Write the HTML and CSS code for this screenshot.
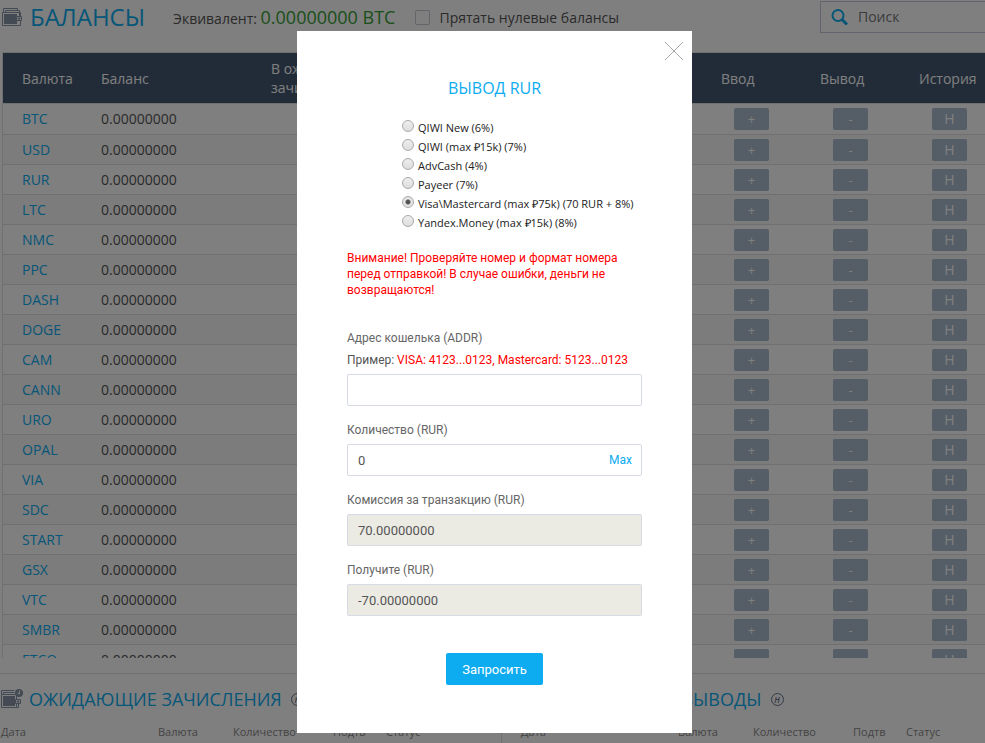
FILE: index.html
```html
<!DOCTYPE html>
<html lang="ru">
<head>
    <meta charset="UTF-8">
    <meta name="viewport" content="width=device-width, initial-scale=1.0">
    <title>Балансы</title>
    <link rel="stylesheet" href="styles.css">
</head>
<body>

    <div class="page">
        <!-- Top bar -->
        <header class="topbar">
            <svg class="wallet-icon" width="20" height="18" viewBox="0 0 20 18" fill="none" stroke="#8795a8">
                <path d="M1.500 4V.5h14v2M3.500 4V2.500h14V8"/>
                <path d="M.5 4.500h18v13H.5z"/>
                <path d="M2 6h13v10H2z" fill="#8795a8" stroke="none"/>
                <path d="M14.500 8.500h5v4h-5z" fill="#fff"/>
                <path d="M16 10h2v1h-2z"/>
            </svg>
            <h1>БАЛАНСЫ</h1>
            <p class="equivalent">Эквивалент: <span>0.00000000 BTC</span></p>
            <label class="hide-zero"><input type="checkbox"> Прятать нулевые балансы</label>
            <div class="search">
                <svg width="17" height="16" viewBox="0 0 17 16" fill="none" stroke="#0dacf1" stroke-width="2">
                    <circle cx="7" cy="6.500" r="5.500"/>
                    <path d="M11 10.500l5 5" stroke-width="3"/>
                </svg>
                <input type="text" placeholder="Поиск" aria-label="Поиск">
            </div>
        </header>

        <!-- Balances -->
        <div class="balances">
            <table>
                <colgroup>
                    <col class="col-currency">
                    <col class="col-balance">
                    <col>
                    <col class="col-action">
                    <col class="col-action">
                    <col class="col-action">
                </colgroup>
                <thead>
                    <tr><th>Валюта</th><th>Баланс</th><th>В ожидании<br>зачисления</th><th>Ввод</th><th>Вывод</th><th>История</th></tr>
                </thead>
                <tbody>
                    <tr><td><a href="#">BTC</a></td><td>0.00000000</td><td></td><td><button>+</button></td><td><button>-</button></td><td><button class="history">H</button></td></tr>
                    <tr><td><a href="#">USD</a></td><td>0.00000000</td><td></td><td><button>+</button></td><td><button>-</button></td><td><button class="history">H</button></td></tr>
                    <tr><td><a href="#">RUR</a></td><td>0.00000000</td><td></td><td><button>+</button></td><td><button>-</button></td><td><button class="history">H</button></td></tr>
                    <tr><td><a href="#">LTC</a></td><td>0.00000000</td><td></td><td><button>+</button></td><td><button>-</button></td><td><button class="history">H</button></td></tr>
                    <tr><td><a href="#">NMC</a></td><td>0.00000000</td><td></td><td><button>+</button></td><td><button>-</button></td><td><button class="history">H</button></td></tr>
                    <tr><td><a href="#">PPC</a></td><td>0.00000000</td><td></td><td><button>+</button></td><td><button>-</button></td><td><button class="history">H</button></td></tr>
                    <tr><td><a href="#">DASH</a></td><td>0.00000000</td><td></td><td><button>+</button></td><td><button>-</button></td><td><button class="history">H</button></td></tr>
                    <tr><td><a href="#">DOGE</a></td><td>0.00000000</td><td></td><td><button>+</button></td><td><button>-</button></td><td><button class="history">H</button></td></tr>
                    <tr><td><a href="#">CAM</a></td><td>0.00000000</td><td></td><td><button>+</button></td><td><button>-</button></td><td><button class="history">H</button></td></tr>
                    <tr><td><a href="#">CANN</a></td><td>0.00000000</td><td></td><td><button>+</button></td><td><button>-</button></td><td><button class="history">H</button></td></tr>
                    <tr><td><a href="#">URO</a></td><td>0.00000000</td><td></td><td><button>+</button></td><td><button>-</button></td><td><button class="history">H</button></td></tr>
                    <tr><td><a href="#">OPAL</a></td><td>0.00000000</td><td></td><td><button>+</button></td><td><button>-</button></td><td><button class="history">H</button></td></tr>
                    <tr><td><a href="#">VIA</a></td><td>0.00000000</td><td></td><td><button>+</button></td><td><button>-</button></td><td><button class="history">H</button></td></tr>
                    <tr><td><a href="#">SDC</a></td><td>0.00000000</td><td></td><td><button>+</button></td><td><button>-</button></td><td><button class="history">H</button></td></tr>
                    <tr><td><a href="#">START</a></td><td>0.00000000</td><td></td><td><button>+</button></td><td><button>-</button></td><td><button class="history">H</button></td></tr>
                    <tr><td><a href="#">GSX</a></td><td>0.00000000</td><td></td><td><button>+</button></td><td><button>-</button></td><td><button class="history">H</button></td></tr>
                    <tr><td><a href="#">VTC</a></td><td>0.00000000</td><td></td><td><button>+</button></td><td><button>-</button></td><td><button class="history">H</button></td></tr>
                    <tr><td><a href="#">SMBR</a></td><td>0.00000000</td><td></td><td><button>+</button></td><td><button>-</button></td><td><button class="history">H</button></td></tr>
                    <tr><td><a href="#">ETCO</a></td><td>0.00000000</td><td></td><td><button>+</button></td><td><button>-</button></td><td><button class="history">H</button></td></tr>
                </tbody>
            </table>
        </div>

        <!-- Pending operations -->
        <div class="pending">
            <section>
                <h2>
                    <svg class="wallet-icon" width="23" height="20" viewBox="0 0 23 20" fill="none" stroke="#8795a8">
                        <path d="M1.500 5V1.500h13M3.500 5V3.500h11"/>
                        <path d="M1.500 5.500h15v13h-15zM18.500 15v3.500h-2"/>
                        <path d="M3 7h12v10H3z" fill="#8795a8" stroke="none"/>
                        <path d="M15.500 10.500h5v4h-5z" fill="#fff"/>
                        <path d="M17 12h2v1h-2z"/>
                        <circle cx="19" cy="4" r="4" fill="#8795a8" stroke="none"/>
                        <path d="M19.500 1.500V5L17.500 4" stroke="#fff"/>
                    </svg>
                    ОЖИДАЮЩИЕ ЗАЧИСЛЕНИЯ
                    <a class="log-link" href="#">H</a>
                </h2>
                <div class="pending-head">
                    <span>Дата</span><span>Валюта</span><span>Количество</span><span>Подтв</span><span>Статус</span>
                </div>
            </section>
            <section>
                <h2>
                    <svg class="wallet-icon" width="23" height="20" viewBox="0 0 23 20" fill="none" stroke="#8795a8">
                        <path d="M1.500 5V1.500h13M3.500 5V3.500h11"/>
                        <path d="M1.500 5.500h15v13h-15zM18.500 15v3.500h-2"/>
                        <path d="M3 7h12v10H3z" fill="#8795a8" stroke="none"/>
                        <path d="M15.500 10.500h5v4h-5z" fill="#fff"/>
                    </svg>
                    ОЖИДАЮЩИЕ ВЫВОДЫ
                    <a class="log-link" href="#">H</a>
                </h2>
                <div class="pending-head">
                    <span>Дата</span><span>Валюта</span><span>Количество</span><span>Подтв</span><span>Статус</span>
                </div>
            </section>
        </div>
    </div>

    <!-- Withdraw dialog -->
    <div class="overlay">
        <form class="modal" role="dialog" aria-labelledby="modal-title">
            <button type="button" class="close" aria-label="Закрыть">
                <svg width="18" height="18" viewBox="0 0 18 18" stroke="#aaa"><path d="M0 0l18 18M18 0L0 18"/></svg>
            </button>
            <h3 id="modal-title">ВЫВОД RUR</h3>

            <div class="methods">
                <label><input type="radio" name="method"> QIWI New (6%)</label>
                <label><input type="radio" name="method"> QIWI (max ₽15k) (7%)</label>
                <label><input type="radio" name="method"> AdvCash (4%)</label>
                <label><input type="radio" name="method"> Payeer (7%)</label>
                <label><input type="radio" name="method" checked> Visa\Mastercard (max ₽75k) (70 RUR + 8%)</label>
                <label><input type="radio" name="method"> Yandex.Money (max ₽15k) (8%)</label>
            </div>

            <p class="warning">Внимание! Проверяйте номер и формат номера<br>перед отправкой! В случае ошибки, деньги не<br>возвращаются!</p>

            <div class="field">
                <label for="address">Адрес кошелька (ADDR)</label>
                <p class="example">Пример: <span>VISA: 4123...0123, Mastercard: 5123...0123</span></p>
                <input type="text" id="address">
            </div>
            <div class="field">
                <label for="amount">Количество (RUR)</label>
                <div class="amount-box">
                    <input type="text" id="amount" value="0">
                    <a href="#">Max</a>
                </div>
            </div>
            <div class="field">
                <label for="fee">Комиссия за транзакцию (RUR)</label>
                <input type="text" id="fee" value="70.00000000" readonly>
            </div>
            <div class="field">
                <label for="total">Получите (RUR)</label>
                <input type="text" id="total" value="-70.00000000" readonly>
            </div>

            <button type="submit" class="submit">Запросить</button>
        </form>
    </div>

</body>
</html>
```
FILE: styles.css
```css
:root {
    --blue: #0dacf1;
    --navy: #445872;
    --line: #e0e0e0;
    --input-border: #d5dae5;
}

* {
    box-sizing: border-box;
}

body {
    margin: 0;
    font-family: "Open Sans", "Noto Sans", sans-serif;
    font-size: 14px;
    color: #555;
    background: #fff;
    overflow: hidden;
}

h1, h2, h3, p {
    margin: 0;
    font-weight: 400;
}

a {
    color: var(--blue);
    text-decoration: none;
}

button {
    border: none;
    cursor: pointer;
    font-family: inherit;
}

/* the page runs a little wider than the window */
.page {
    margin-right: -19px;
}

.topbar {
    display: flex;
    align-items: center;
    height: 52px;
    padding: 0 0 18px 2px;
}

.wallet-icon {
    flex: none;
}

h1 {
    margin: 0 28px 0 8px;
    font-size: 24px;
    line-height: 32px;
    color: var(--blue);
}

.equivalent {
    font-size: 14px;
    white-space: nowrap;
}

.equivalent span {
    font-size: 18px;
    color: #35a035;
}

.hide-zero {
    display: flex;
    align-items: center;
    gap: 9px;
    margin-left: 20px;
    font-size: 14px;
    white-space: nowrap;
}

.hide-zero input {
    appearance: none;
    width: 15px;
    height: 15px;
    margin: 0;
    border: 1px solid #c5cad5;
    border-radius: 2px;
}

.search {
    display: flex;
    align-items: center;
    gap: 10px;
    width: 184px;
    height: 32px;
    margin-left: auto;
    padding-left: 10px;
    border: 1px solid #c8cad8;
}

.search input {
    width: 120px;
    padding: 0;
    border: none;
    outline: none;
    background: none;
    font: 14px/20px "Open Sans", sans-serif;
}

.search input::placeholder {
    color: #777;
}

/* Balances table */
.balances {
    height: 606px;
    margin: 0 5px 0 2px;
    border-left: 1px solid var(--line);
    border-top: 1px solid var(--line);
    overflow: hidden;
}

table {
    width: 100%;
    table-layout: fixed;
    border-collapse: separate;
    border-spacing: 0;
}

.col-currency {
    width: 79px;
}

.col-balance {
    width: 170px;
}

.col-action {
    width: 99px;
}

th {
    height: 51px;
    padding: 0 0 0 19px;
    border-bottom: 1px solid var(--line);
    background: var(--navy);
    color: #fff;
    font-weight: 400;
    font-size: 14px;
    line-height: 19px;
    text-align: left;
}

td {
    height: 30px;
    padding: 0 0 0 19px;
    border-bottom: 1px solid var(--line);
    line-height: 20px;
}

tbody tr:first-child td {
    height: 31px;
}

tr:nth-child(even) td {
    background: #f8f8f8;
}

td:nth-child(n+4) {
    padding: 0;
    text-align: center;
}

td button {
    display: block;
    width: 35px;
    height: 22px;
    margin: 0 auto;
    padding: 0;
    border-radius: 2px;
    background: #aabacc;
    color: #fff;
    font-size: 13px;
    line-height: 20px;
}

.history {
    font-size: 14px;
}

/* Pending operations */
.pending {
    display: grid;
    grid-template-columns: 1fr 1fr;
    margin-top: 15px;
    border-top: 1px solid var(--line);
}

.pending section + section {
    padding-left: 18px;
}

h2 {
    display: flex;
    align-items: center;
    gap: 6px;
    height: 50px;
    font-size: 18px;
    color: var(--blue);
    white-space: nowrap;
}

.log-link {
    width: 13px;
    height: 13px;
    margin-left: 3px;
    border: 1px solid #66758a;
    border-radius: 50%;
    color: #66758a;
    font-size: 8px;
    font-style: italic;
    font-weight: 600;
    line-height: 11px;
    text-align: center;
}

.pending-head {
    display: grid;
    grid-template-columns: 157px 75px 100px 53px 1fr;
    padding-left: 1px;
    font-size: 11px;
    line-height: 16px;
    padding-bottom: 8px;
    color: #888;
}

.pending section:first-child .pending-head {
    border-right: 1px solid var(--line);
}

/* Withdraw dialog */
.overlay {
    position: fixed;
    inset: 0;
    display: flex;
    justify-content: center;
    align-items: flex-start;
    padding: 31px 0 0 4px;
    background: rgba(0, 0, 0, 0.5);
}

.modal {
    position: relative;
    width: 395px;
    padding: 45px 50px 48px;
    background: #fff;
    font-family: Roboto, "Open Sans", sans-serif;
    font-size: 12px;
}

.close {
    position: absolute;
    top: 11px;
    right: 9px;
    padding: 0;
    background: none;
    line-height: 0;
}

h3 {
    margin-bottom: 18px;
    font-family: "Open Sans", sans-serif;
    font-size: 16px;
    line-height: 24px;
    text-align: center;
    color: var(--blue);
}

.methods {
    margin: 0 0 18px 55px;
    font-family: "Open Sans", sans-serif;
    font-size: 11px;
    color: #222;
}

.methods label {
    display: flex;
    align-items: center;
    gap: 4px;
    height: 19px;
    white-space: nowrap;
}

.methods input {
    appearance: none;
    width: 12px;
    height: 12px;
    margin: 0 0 4px;
    border: 1px solid #aaa;
    border-radius: 50%;
    background: linear-gradient(#eee, #ddd);
}

.methods input:checked {
    background: radial-gradient(circle, #555 0 2px, #e4e4e4 3px);
}

.warning {
    margin-bottom: 26px;
    line-height: 16px;
    color: #f00;
    white-space: nowrap;
}

.field {
    margin-bottom: 10px;
}

.field label {
    display: block;
    line-height: 28px;
    color: #666;
}

.example {
    margin-bottom: 6px;
    line-height: 16px;
    white-space: nowrap;
}

.example span {
    color: #f00;
}

.field input {
    display: block;
    width: 100%;
    height: 32px;
    padding: 0 10px;
    border: 1px solid var(--input-border);
    border-radius: 2px;
    color: #555;
    font: 13px Roboto, sans-serif;
}

.field input[readonly] {
    background: #ebebe4;
}

.amount-box {
    position: relative;
}

.amount-box a {
    position: absolute;
    top: 0;
    right: 10px;
    line-height: 32px;
}

.submit {
    display: block;
    height: 32px;
    margin: 37px auto 0;
    padding: 0 16px;
    border-radius: 2px;
    background: var(--blue);
    color: #fff;
    font-size: 13px;
}
```
